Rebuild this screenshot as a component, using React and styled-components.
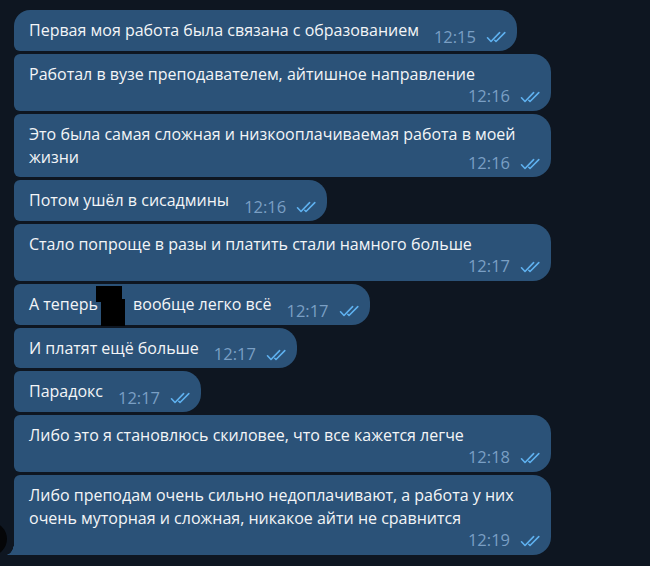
import styled, { createGlobalStyle } from "styled-components";

const GlobalStyle = createGlobalStyle`
  html, body {
    margin: 0;
    padding: 0;
    background: #0e1621;
  }
  body {
    font-family: "Open Sans", "Noto Sans", sans-serif;
  }
`;

const messages = [
  { text: "Первая моя работа была связана с образованием", time: "12:15", inline: true },
  { text: "Работал в вузе преподавателем, айтишное направление", time: "12:16" },
  { text: "Это была самая сложная и низкооплачиваемая работа в моей жизни", time: "12:16", inline: true },
  { text: "Потом ушёл в сисадмины", time: "12:16", inline: true },
  { text: "Стало попроще в разы и платить стали намного больше", time: "12:17" },
  { text: ["А теперь", " вообще легко всё"], time: "12:17", inline: true, hidden: true },
  { text: "И платят ещё больше", time: "12:17", inline: true },
  { text: "Парадокс", time: "12:17", inline: true },
  { text: "Либо это я становлюсь скиловее, что все кажется легче", time: "12:18" },
  {
    text: "Либо преподам очень сильно недоплачивают, а работа у них очень муторная и сложная, никакое айти не сравнится",
    time: "12:19",
  },
];

const Checks = () => (
  <svg width="23" height="12" viewBox="0 0 23 12" fill="none">
    <path d="M1.5 6.8 L5 10.5 L13.6 1.6" stroke="#5fb1ef" strokeWidth="1.6" strokeLinecap="round" strokeLinejoin="round" />
    <path d="M8.8 9.3 L10 10.5 L18.8 1.6" stroke="#5fb1ef" strokeWidth="1.6" strokeLinecap="round" strokeLinejoin="round" />
  </svg>
);

const App = () => {
  return (
    <>
      <GlobalStyle />
      <Chat>
        {messages.map((m, i) => {
          const first = i === 0;
          const last = i === messages.length - 1;
          return (
            <Row key={i}>
              {last && <Avatar />}
              <Bubble $inline={m.inline} $first={first} $last={last}>
                <Text>
                  {m.hidden ? (
                    <>
                      {m.text[0]}
                      <Redact />
                      {m.text[1]}
                    </>
                  ) : (
                    m.text
                  )}
                </Text>
                <Meta $inline={m.inline}>
                  <Time>{m.time}</Time>
                  <Checks />
                </Meta>
              </Bubble>
            </Row>
          );
        })}
        <NextBubble />
      </Chat>
    </>
  );
};

const Chat = styled.div`
  height: 566px;
  overflow: hidden;
  padding: 10px 0 0 14px;
  box-sizing: border-box;
  display: flex;
  flex-direction: column;
  gap: 3px;
`;

const Row = styled.div`
  position: relative;
  display: flex;
`;

const Avatar = styled.div`
  position: absolute;
  left: -41px;
  bottom: -1px;
  width: 34px;
  height: 34px;
  border-radius: 50%;
  background: #050608;
`;

const Bubble = styled.div`
  position: relative;
  box-sizing: border-box;
  width: ${(p) => (p.$inline ? "fit-content" : "537px")};
  max-width: 537px;
  padding: 9px 8px 9px 15px;
  background: #2b5278;
  color: #f3f5f7;
  font-size: 16px;
  line-height: 22.5px;
  border-radius: ${(p) => (p.$first ? "16px" : "6px")} 18px 18px ${(p) => (p.$last ? "0" : "6px")};
  display: flow-root;

  ${(p) =>
    p.$last &&
    `
    &::before {
      content: "";
      position: absolute;
      left: -8px;
      bottom: 0;
      width: 8px;
      height: 12px;
      background: radial-gradient(ellipse 8px 12px at 0 0, transparent 96%, #2b5278 100%);
    }
  `}
`;

const Text = styled.span`
  white-space: normal;
`;

const Redact = styled.span`
  position: relative;
  display: inline-block;
  width: 31px;
  height: 0;

  &::before,
  &::after {
    content: "";
    position: absolute;
    background: #000;
  }
  &::before {
    left: -2px;
    top: -24px;
    width: 26px;
    height: 16px;
  }
  &::after {
    left: 3px;
    top: -11px;
    width: 24px;
    height: 27px;
  }
`;

const Meta = styled.span`
  display: flex;
  align-items: center;
  justify-content: flex-end;
  gap: 10px;
  position: relative;
  ${(p) =>
    p.$inline
      ? `
    float: right;
    margin-left: 15px;
    height: 22px;
    top: 6px;
  `
      : `
    height: 17px;
    top: 2px;
  `}

  svg {
    position: relative;
    top: 1px;
  }
`;

const Time = styled.span`
  font-size: 16.5px;
  color: #7a9fc4;
  line-height: 17px;
`;

const NextBubble = styled.div`
  margin: 8px 0 0 14px;
  width: 516px;
  height: 20px;
  background: #131c27;
  border-radius: 16px 16px 0 0;
`;

export default App;
